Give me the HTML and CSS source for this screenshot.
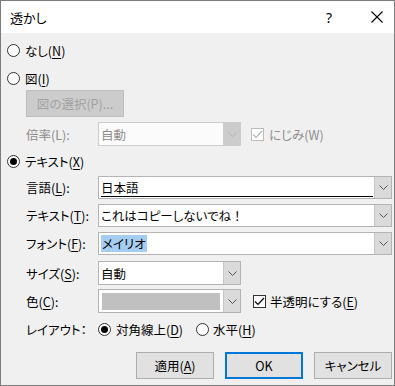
FILE: index.html
```html
<!DOCTYPE html>
<html lang="ja">
<head>
<meta charset="utf-8">
<link rel="stylesheet" href="styles.css">
</head>
<body>
<div class="dialog">
  <div class="titlebar">
    <span class="title">透かし</span>
    <span class="help">?</span>
    <svg class="close" width="12" height="12" viewBox="0 0 12 12"><path d="M0.5 0.5 L11.5 11.5 M11.5 0.5 L0.5 11.5" stroke="#000" stroke-width="1.1" fill="none"/></svg>
  </div>
  <div class="content">
    <div class="row r-none">
      <span class="radio"></span><span class="opt">なし(<u>N</u>)</span>
    </div>
    <div class="row r-pic">
      <span class="radio"></span><span class="opt">図(<u>I</u>)</span>
    </div>
    <div class="pickbtn">図の選択(P)...</div>
    <div class="row r-scale">
      <span class="label disabled">倍率(L):</span>
      <div class="combo small disabled-combo">
        <div class="edit"><span class="val gray">自動</span></div>
        <div class="drop"><svg width="9" height="5" viewBox="0 0 9 5"><path d="M0.5 0.5 L4.5 4.5 L8.5 0.5" stroke="#b5b5b5" fill="none"/></svg></div>
      </div>
      <span class="check disabled-check"><svg width="11" height="9" viewBox="0 0 11 9"><path d="M1 4.5 L4 7.5 L10 1" stroke="#b8b8b8" stroke-width="1.2" fill="none"/></svg></span>
      <span class="opt disabled">にじみ(W)</span>
    </div>
    <div class="row r-text">
      <span class="radio on"></span><span class="opt">テキスト(<u>X</u>)</span>
    </div>
    <div class="row r-lang">
      <span class="label">言語(<u>L</u>):</span>
      <div class="combo wide">
        <div class="edit"><span class="val dbl">日本語</span></div>
        <div class="drop"><svg width="9" height="5" viewBox="0 0 9 5"><path d="M0.5 0.5 L4.5 4.5 L8.5 0.5" stroke="#555" fill="none"/></svg></div>
      </div>
    </div>
    <div class="row r-txt">
      <span class="label">テキスト(<u>T</u>):</span>
      <div class="combo wide">
        <div class="edit"><span class="val">これはコピーしないでね<span class="fw">！</span></span></div>
        <div class="drop"><svg width="9" height="5" viewBox="0 0 9 5"><path d="M0.5 0.5 L4.5 4.5 L8.5 0.5" stroke="#555" fill="none"/></svg></div>
      </div>
    </div>
    <div class="row r-font">
      <span class="label">フォント(<u>F</u>):</span>
      <div class="combo wide">
        <div class="edit"><span class="val sel">メイリオ</span></div>
        <div class="drop"><svg width="9" height="5" viewBox="0 0 9 5"><path d="M0.5 0.5 L4.5 4.5 L8.5 0.5" stroke="#555" fill="none"/></svg></div>
      </div>
    </div>
    <div class="row r-size">
      <span class="label">サイズ(<u>S</u>):</span>
      <div class="combo small">
        <div class="edit"><span class="val">自動</span></div>
        <div class="drop"><svg width="9" height="5" viewBox="0 0 9 5"><path d="M0.5 0.5 L4.5 4.5 L8.5 0.5" stroke="#555" fill="none"/></svg></div>
      </div>
    </div>
    <div class="row r-color">
      <span class="label">色(<u>C</u>):</span>
      <div class="combo small">
        <div class="edit"><span class="swatch"></span></div>
        <div class="drop"><svg width="9" height="5" viewBox="0 0 9 5"><path d="M0.5 0.5 L4.5 4.5 L8.5 0.5" stroke="#555" fill="none"/></svg></div>
      </div>
      <span class="check on-check"><svg width="11" height="9" viewBox="0 0 11 9"><path d="M1 4.5 L4 7.5 L10 1" stroke="#000" stroke-width="1.2" fill="none"/></svg></span>
      <span class="opt">半透明にする(<u>E</u>)</span>
    </div>
    <div class="row r-layout">
      <span class="label">レイアウト：</span>
      <span class="radio on"></span><span class="opt">対角線上(<u>D</u>)</span>
      <span class="radio r2"></span><span class="opt">水平(<u>H</u>)</span>
    </div>
    <div class="buttons">
      <div class="btn">適用(<u>A</u>)</div>
      <div class="btn default">OK</div>
      <div class="btn">キャンセル</div>
    </div>
  </div>
</div>
</body>
</html>
```
FILE: styles.css
```css
* { box-sizing: border-box; }
html, body { margin: 0; padding: 0; }
body {
  font-family: "Noto Sans CJK JP", "Noto Sans", sans-serif;
  font-size: 12.5px;
  font-feature-settings: "palt" 1;
  color: #000;
  background: #fff;
}
.dialog {
  width: 395px;
  height: 386px;
  border: 1px solid #7c7c7c;
  background: #f0f0f0;
  display: flex;
  flex-direction: column;
}
.titlebar {
  height: 32px;
  background: #fff;
  display: flex;
  align-items: center;
  flex: none;
}
.title { margin-left: 9px; font-size: 13px; }
.help { margin-left: auto; margin-right: 39px; font-size: 14px; font-family: "Noto Sans", sans-serif; }
.close { margin-right: 11px; }
.content { display: flex; flex-direction: column; }
.row { display: flex; align-items: center; height: 24px; flex: none; }
.r-none { margin-top: 5px; }
.r-pic { margin-top: 4px; }
.r-scale { margin-top: 5px; }
.r-text { margin-top: 3px; }
.r-lang { margin-top: 3px; height: 23px; }
.r-txt { margin-top: 5px; height: 23px; }
.r-font { margin-top: 5px; height: 23px; }
.r-size { margin-top: 6px; }
.r-color { margin-top: 4px; }
.r-layout { margin-top: 4px; }

.radio {
  width: 13px; height: 13px;
  border: 1px solid #333;
  border-radius: 50%;
  background: #fff;
  margin-left: 6px;
  margin-right: 5px;
  flex: none;
  display: flex; align-items: center; justify-content: center;
}
.radio.on::after {
  content: "";
  width: 7px; height: 7px; border-radius: 50%; background: #000;
}
.r-layout .radio { margin-left: 0; }
.r-layout .radio.r2 { margin-left: 13px; margin-right: 4px; }
.opt { white-space: nowrap; }
u { text-decoration: underline; text-underline-offset: 2px; }
.fw { font-feature-settings: normal; }

.pickbtn {
  margin-left: 25px;
  width: 98px; height: 27px;
  background: #cccccc;
  border: 1px solid #bfbfbf;
  color: #a2a2a2;
  display: flex; align-items: center; justify-content: center;
  flex: none;
}
.label {
  margin-left: 25px;
  width: 72px;
  flex: none;
  white-space: nowrap;
}
.disabled { color: #8d8d8d; }

.combo {
  display: flex;
  height: 100%;
  border: 1px solid #b4b4b4;
  background: #fff;
  flex: none;
}
.combo.wide { width: 294px; }
.combo.small { width: 143px; }
.edit {
  flex: 1;
  display: flex; align-items: center;
  padding-left: 2px;
  padding-right: 1px;
  overflow: hidden;
}
.val { white-space: nowrap; }
.gray { color: #8d8d8d; }
.dbl {
  display: block;
  width: 100%;
  line-height: 17px;
  border-bottom: 3px double #000;
  margin-top: 2px;
}
.sel { background: #a5cdf1; padding: 0 1px; line-height: 17px; }
.swatch { display: block; width: 100%; height: 17px; background: #c0c0c0; margin-left: 1px; margin-right: 2px; }
.drop {
  width: 17px;
  background: #dadada;
  border-left: 1px solid #c6c6c6;
  display: flex; align-items: center; justify-content: center;
}
.disabled-combo { border-color: #cdcdcd; }
.disabled-combo .edit { background: #fbfbfb; }
.disabled-combo .drop { background: #cccccc; border-left-color: #cccccc; }

.check {
  width: 13px; height: 13px;
  border: 1px solid #333;
  background: #fff;
  display: flex; align-items: center; justify-content: center;
  flex: none;
  margin-right: 5px;
}
.disabled-check { border-color: #bcbcbc; margin-left: 10px; }
.on-check { margin-left: 12px; margin-right: 4px; }

.buttons {
  display: flex;
  justify-content: flex-end;
  gap: 11px;
  margin-top: 11px;
  padding-right: 2px;
}
.btn {
  width: 78px; height: 27px;
  background: #e1e1e1;
  border: 1px solid #adadad;
  display: flex; align-items: center; justify-content: center;
}
.btn.default { border: 2px solid #0078d7; }
```
